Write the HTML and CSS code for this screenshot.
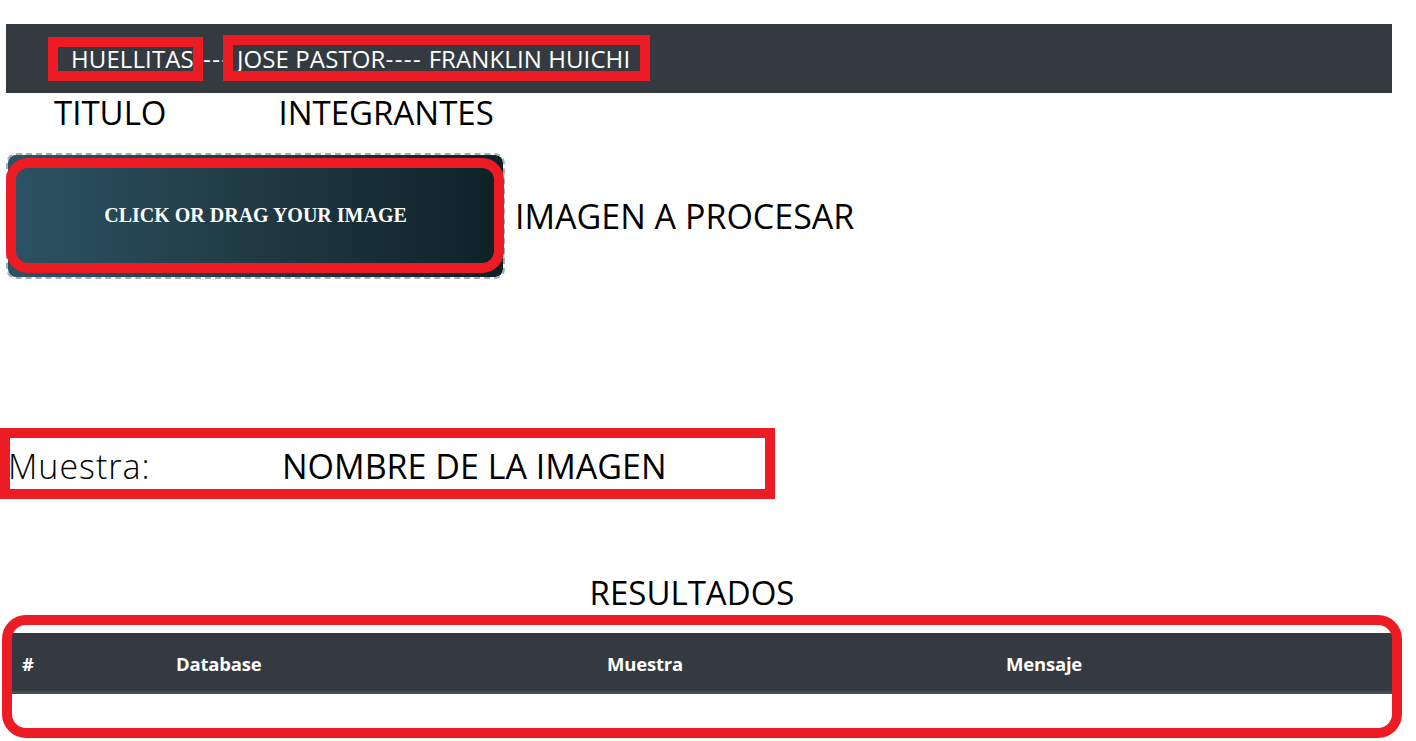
FILE: index.html
```html
<!DOCTYPE html>
<html lang="es">
<head>
<meta charset="utf-8">
<title>Huellitas</title>
<link rel="stylesheet" href="styles.css">
</head>
<body>
  <nav class="navbar">
    <span class="brand">HUELLITAS<span class="sep">----</span> JOSE PASTOR<span class="sep">----</span> FRANKLIN HUICHI</span>
  </nav>
  <div class="labels">
    <span class="label-titulo">TITULO</span>
    <span class="label-integrantes">INTEGRANTES</span>
  </div>
  <div class="upload-row">
    <div class="dropzone">CLICK OR DRAG YOUR IMAGE</div>
    <span class="big-label">IMAGEN A PROCESAR</span>
  </div>
  <div class="muestra-row">
    <span class="muestra">Muestra:</span>
    <span class="nombre">NOMBRE DE LA IMAGEN</span>
  </div>
  <h2 class="resultados">RESULTADOS</h2>
  <table class="results">
    <thead>
      <tr>
        <th class="c1">#</th>
        <th class="c2">Database</th>
        <th class="c3">Muestra</th>
        <th class="c4">Mensaje</th>
      </tr>
    </thead>
    <tbody>
      <tr><td colspan="4"></td></tr>
    </tbody>
  </table>

  <div class="mark mark-title"></div>
  <div class="mark mark-members"></div>
  <div class="mark mark-upload"></div>
  <div class="mark mark-muestra"></div>
  <div class="mark mark-table"></div>
</body>
</html>
```

FILE: styles.css
```css
html, body {
  margin: 0;
  padding: 0;
  background: #ffffff;
}
body {
  position: relative;
  width: 1416px;
  height: 741px;
  overflow: hidden;
  font-family: "Open Sans", "Noto Sans", sans-serif;
  color: #000;
}
.navbar {
  margin: 24px 24px 0 6px;
  height: 69px;
  background: #343a40;
  display: flex;
  align-items: center;
  padding-left: 65px;
}
.brand {
  color: #ffffff;
  font-size: 24px;
  letter-spacing: 0.1px;
  white-space: pre;
}
.sep {
  letter-spacing: 1.5px;
}
.labels {
  display: flex;
  height: 40px;
  line-height: 40px;
  font-size: 33px;
  padding-left: 54px;
}
.label-integrantes {
  margin-left: 112px;
}
.upload-row {
  display: flex;
  align-items: center;
  margin-top: 20px;
  margin-left: 6px;
}
.dropzone {
  width: 495px;
  height: 120px;
  border: 2px dashed #a9acaf;
  border-radius: 10px;
  background: linear-gradient(to right, #2c5364, #203a43, #0f2027);
  background-clip: padding-box;
  color: #ffffff;
  font-family: "Liberation Serif", "DejaVu Serif", serif;
  font-weight: bold;
  font-size: 20px;
  display: flex;
  align-items: center;
  justify-content: center;
  padding-bottom: 2px;
  box-sizing: content-box;
}
.big-label {
  font-size: 34px;
  margin-left: 10px;
  line-height: 40px;
}
.muestra-row {
  display: flex;
  margin-top: 167px;
  height: 40px;
  line-height: 40px;
  padding-left: 8px;
  font-size: 34px;
}
.muestra {
  font-weight: 300;
  letter-spacing: 1px;
  width: 274px;
}
.resultados {
  margin: 87px 38px 0 6px;
  height: 40px;
  line-height: 40px;
  font-size: 33px;
  font-weight: 400;
  text-align: center;
}
.results {
  margin: 20px 0 0 12px;
  width: 1380px;
  border-collapse: collapse;
  table-layout: fixed;
}
.results th {
  background: #343a40;
  color: #ffffff;
  font-size: 18.5px;
  font-weight: 700;
  text-align: left;
  height: 59px;
  padding: 4px 12px 0;
  box-sizing: border-box;
  border-bottom: 3px solid #454d55;
  letter-spacing: -0.2px;
}
.results th.c1 { width: 152px; padding-left: 10px; }
.results th.c2 { width: 431px; }
.results th.c3 { width: 399px; }
.results td {
  height: 34px;
}
.mark {
  position: absolute;
  border: 10px solid #ed1c24;
  box-sizing: border-box;
}
.mark-title {
  left: 48px;
  top: 37px;
  width: 155px;
  height: 44px;
}
.mark-members {
  left: 223px;
  top: 35px;
  width: 427px;
  height: 46px;
}
.mark-upload {
  left: 6px;
  top: 158px;
  width: 498px;
  height: 115px;
  border-radius: 22px;
}
.mark-muestra {
  left: 0;
  top: 428px;
  width: 775px;
  height: 71px;
}
.mark-table {
  left: 2px;
  top: 615px;
  width: 1400px;
  height: 123px;
  border-radius: 24px;
}
```
